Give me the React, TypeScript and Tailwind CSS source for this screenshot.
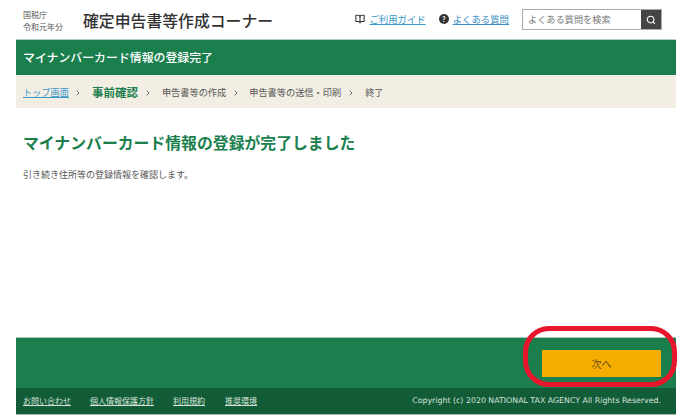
import { BookOpen, ChevronRight, Search } from 'lucide-react';

const font = { fontFamily: '"Noto Sans CJK JP", "Liberation Sans", sans-serif' };

function Sep({ className }: { className: string }) {
  return <ChevronRight className={`h-[8px] w-[8px] shrink-0 text-[#555] ${className}`} strokeWidth={2.5} />;
}

export default function App() {
  return (
    <div className="relative h-[420px] w-[691px] overflow-hidden bg-white pl-4 pr-[15px]" style={font}>
      <div className="flex h-[420px] flex-col pb-[5px]">
        <header className="flex h-10 shrink-0 items-center border-b border-[#b5d1c0]">
          <div className="ml-[7px] w-[53px] pt-[3px] text-[8px] leading-[12px] text-[#555]">
            <div>国税庁</div>
            <div>令和元年分</div>
          </div>
          <div className="ml-[7px] pt-[3px] text-[15.85px] font-medium text-[#333]">確定申告書等作成コーナー</div>
          <nav className="ml-auto flex items-center text-[9.4px]">
            <BookOpen className="h-[10px] w-[10px] text-[#333]" strokeWidth={2.5} />
            <a className="ml-[4px] text-[#3a97c9] underline">ご利用ガイド</a>
            <span className="ml-[13px] flex h-[10px] w-[10px] items-center justify-center rounded-full bg-[#333] text-[7px] font-bold text-white">?</span>
            <a className="ml-[4px] text-[#3a8fc4] underline">よくある質問</a>
          </nav>
          <div className="ml-[13px] mr-[14px] flex h-[21px] w-[140px] border border-[#aaa]">
            <div className="flex-1 pl-[5px] text-[9.2px] leading-[19px] text-[#777]">よくある質問を検索</div>
            <div className="flex w-5 items-center justify-center bg-[#444]">
              <Search className="h-[10px] w-[10px] text-white" strokeWidth={2.5} />
            </div>
          </div>
        </header>

        <div className="flex h-[35px] shrink-0 items-center bg-[#1a7f4d] pb-[2px] pl-[7px] text-[11.9px] font-medium text-white">
          マイナンバーカード情報の登録完了
        </div>

        <div className="mt-px flex h-[32px] shrink-0 items-center bg-[#f2eee3] pl-[7px] pt-[1px] text-[9.2px] text-[#555]">
          <a className="text-[#3a97c9] underline">トップ画面</a>
          <Sep className="ml-[5px] mr-[10px]" />
          <span className="text-[11.5px] font-bold text-[#1a7f4d]">事前確認</span>
          <Sep className="ml-[6px] mr-[10px]" />
          <span>申告書等の作成</span>
          <Sep className="ml-[6px] mr-[9px]" />
          <span>申告書等の送信・印刷</span>
          <Sep className="ml-[6px] mr-[10px]" />
          <span>終了</span>
        </div>

        <main className="flex-1 pl-[7px] pt-[24px]">
          <h1 className="text-[15.85px] font-bold leading-[22px] text-[#1a7f4d]">マイナンバーカード情報の登録が完了しました</h1>
          <p className="mt-[14px] text-[9px] leading-[14px] text-[#555]">引き続き住所等の登録情報を確認します。</p>
        </main>

        <div className="flex h-[51px] shrink-0 items-center justify-end border-t border-[#a5c9b4] bg-[#1a7f4d] pr-[15px]">
          <button className="h-[27px] w-[119px] bg-[#f5ae00] text-[10px] text-[#5f4a14]">次へ</button>
        </div>

        <footer className="flex h-[27px] shrink-0 items-center border-b border-[#a9bdb0] bg-[#135c38] pl-[7px] pr-[15px] text-[8px] text-[#d5e2da]">
          <a className="underline">お問い合わせ</a>
          <a className="ml-[19px] underline">個人情報保護方針</a>
          <a className="ml-[19px] underline">利用規約</a>
          <a className="ml-[20px] underline">推奨環境</a>
          <span className="ml-auto text-[7.85px]" style={{ fontFamily: '"DejaVu Sans", sans-serif' }}>
            Copyright (c) 2020 NATIONAL TAX AGENCY All Rights Reserved.
          </span>
        </footer>
      </div>

      <div className="absolute left-[523px] top-[326px] h-[61px] w-[154px] rounded-[26px] border-[5px] border-[#e8162c]" />
    </div>
  );
}
